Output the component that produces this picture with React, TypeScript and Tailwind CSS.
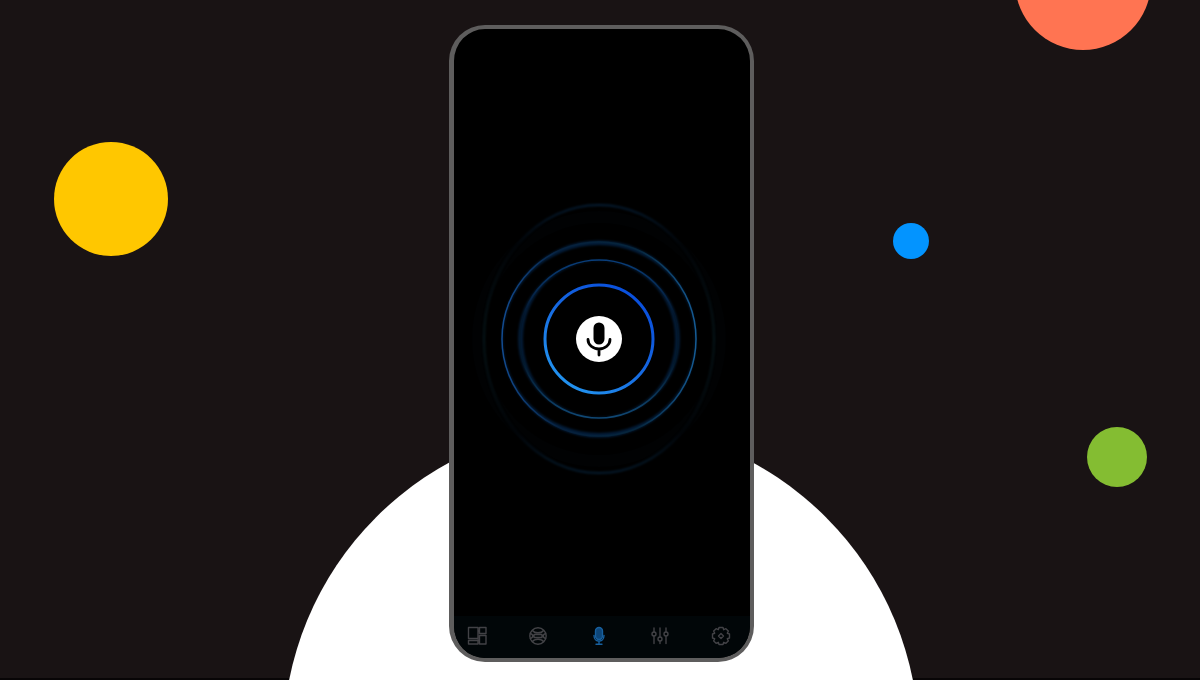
import type { ReactNode } from "react";

function Backdrop() {
  return (
    <div aria-hidden="true" className="pointer-events-none absolute inset-0 overflow-hidden">
      <div className="absolute bottom-0 h-0.5 w-full bg-[#080506]" />
      <div className="absolute left-[283px] top-[424px] size-[636px] rounded-full bg-white" />
      <div className="absolute left-[54px] top-[142px] size-[114px] rounded-full bg-[#ffc700]" />
      <div className="absolute left-[1015px] top-[-86px] size-[136px] rounded-full bg-[#ff7452]" />
      <div className="absolute left-[893px] top-[223px] size-[36px] rounded-full bg-[#0394ff]" />
      <div className="absolute left-[1087px] top-[427px] size-[60px] rounded-full bg-[#84bd32]" />
    </div>
  );
}

function Rings() {
  return (
    <svg aria-hidden="true" viewBox="-145 -145 290 290" className="w-full" fill="none">
      <defs>
        <linearGradient id="core" x1="0.8" y1="0.1" x2="0.2" y2="0.9">
          <stop offset="0" stopColor="#0a50dc" />
          <stop offset="0.45" stopColor="#1565df" />
          <stop offset="1" stopColor="#2190ee" />
        </linearGradient>
        <linearGradient id="thinSide" x1="0" y1="0" x2="1" y2="0">
          <stop offset="0" stopColor="#124b91" />
          <stop offset="0.3" stopColor="#06203c" />
          <stop offset="0.7" stopColor="#06263c" />
          <stop offset="1" stopColor="#155b94" />
        </linearGradient>
        <linearGradient id="thinTop" x1="0" y1="0" x2="0" y2="1">
          <stop offset="0" stopColor="#093e7b" />
          <stop offset="0.35" stopColor="#03162b" />
          <stop offset="0.65" stopColor="#03192b" />
          <stop offset="1" stopColor="#104874" />
        </linearGradient>
        <linearGradient id="outer" x1="0" y1="0" x2="0" y2="1">
          <stop offset="0" stopColor="#051d34" />
          <stop offset="0.15" stopColor="#02060a" />
          <stop offset="0.5" stopColor="#06161a" />
          <stop offset="0.85" stopColor="#02060a" />
          <stop offset="1" stopColor="#051c2f" />
        </linearGradient>
        <filter id="soft"><feGaussianBlur stdDeviation="0.8" colorInterpolationFilters="sRGB" /></filter>
      </defs>
      <ellipse rx="121" ry="122" stroke="#010203" strokeWidth="12" />
      <ellipse rx="115" ry="134" stroke="url(#outer)" strokeWidth="2" filter="url(#soft)" />
      <path fillRule="evenodd" fill="#031d3a" filter="url(#soft)" d="M-97 0a97 98.500 0 1 0 194 0a97 98.500 0 1 0-194 0ZM-96 0a96 94 0 1 1 192 0a96 94 0 1 1-192 0Z" />
      <circle r="97" stroke="url(#thinSide)" strokeWidth="1.500" />
      <path fillRule="evenodd" fill="#031a34" filter="url(#soft)" d="M-81 0a81 79 0 1 0 162 0a81 79 0 1 0-162 0ZM-76 0a76 78 0 1 1 152 0a76 78 0 1 1-152 0Z" />
      <circle r="79" stroke="url(#thinTop)" strokeWidth="1.500" />
      <circle r="54" stroke="url(#core)" strokeWidth="3" />
    </svg>
  );
}

function VoiceButton() {
  return (
    <button type="button" aria-label="Start listening" className="absolute left-1/2 top-1/2 size-[46px] -translate-x-1/2 -translate-y-1/2 rounded-full bg-white">
      <svg viewBox="0 0 46 46" aria-hidden="true">
        <rect x="17.500" y="6.500" width="11" height="22" rx="5.500" fill="#000" />
        <path d="M12 23.500a11 9.500 0 0 0 22 0M23 33v6" fill="none" stroke="#000" strokeWidth="2.800" strokeLinecap="round" />
      </svg>
    </button>
  );
}

function TabButton({ label, active = false, children }: { label: string; active?: boolean; children: ReactNode }) {
  return (
    <button type="button" aria-label={label} aria-current={active ? "page" : undefined} className={active ? "text-[#17609f]" : "text-[#424246]"}>
      <svg viewBox="0 0 20 20" className="size-5" fill="none" stroke="currentColor" strokeWidth="1.400" strokeLinecap="round" strokeLinejoin="round" aria-hidden="true">
        {children}
      </svg>
    </button>
  );
}

function TabBar() {
  return (
    <nav aria-label="Main" className="flex items-center justify-between bg-[#010608] pb-3 pl-[13px] pr-[19px] pt-2.5">
      <TabButton label="Dashboard">
        <path d="M1.500 1.500h9.500v11H1.500zM1.500 14.500h9.500v3.500H1.500zM12.500 1.500h6.500v6H12.500zM12.500 9.500h6.500v8.500H12.500zM11 5h1.500M11 14h1.500" />
      </TabButton>
      <TabButton label="Scenes">
        <circle cx="10" cy="10" r="8.200" />
        <path d="M4.500 4.500c2 3 9 3 11 0M4.500 15.500c2-3 9-3 11 0M2.500 7.500c3 1 3 4 0 5M17.500 7.500c-3 1-3 4 0 5M6 8.500h8v3H6z" />
      </TabButton>
      <TabButton label="Voice" active>
        <rect x="6.500" y="1.500" width="7" height="12" rx="3.500" fill="#0e4679" />
        <path d="M5 9.500c0 7.500 10 7.500 10 0M10 15v3M7 18.300h6" />
      </TabButton>
      <TabButton label="Controls">
        <path d="M4 2v4M4 10v7.500M10 2v9M10 15v2.500M16 2v4M16 10v7.500" />
        <circle cx="4" cy="8" r="2" />
        <circle cx="10" cy="13" r="2" />
        <circle cx="16" cy="8" r="2" />
      </TabButton>
      <TabButton label="Settings">
        <path d="M8 1.500h4l.7 2.200 2.200-1 2.400 2.400-1 2.200 2.200.7v4l-2.200.7 1 2.200-2.400 2.400-2.200-1-.7 2.200H8l-.7-2.200-2.200 1-2.400-2.400 1-2.200-2.200-.7V8l2.200-.7-1-2.200 2.400-2.400 2.200 1z" />
        <path d="M10 7.500l2.500 2.500-2.500 2.500L7.500 10z" />
      </TabButton>
    </nav>
  );
}

export default function App() {
  return (
    <main className="relative flex min-h-screen justify-center overflow-hidden bg-[#191314] pb-[18px] pl-[3px] pt-[25px] font-['Liberation_Sans',sans-serif]">
      <Backdrop />
      <section aria-label="Voice assistant" className="relative flex w-[305px] flex-col overflow-hidden rounded-[36px] border-4 border-l-[5px] border-[#5e5d5d] bg-black">
        <div className="flex grow items-center pr-1.5 pt-[33px]">
          <div className="relative w-full">
            <Rings />
            <VoiceButton />
          </div>
        </div>
        <TabBar />
      </section>
    </main>
  );
}
